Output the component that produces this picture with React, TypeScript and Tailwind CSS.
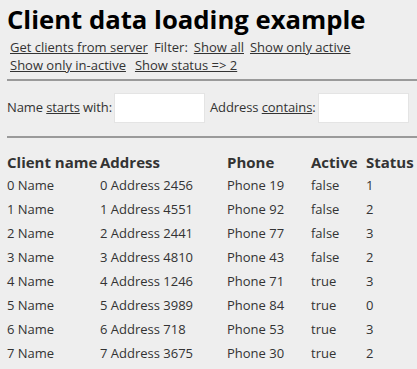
import React from "react";

const clients = [
  { name: "0 Name", address: "0 Address 2456", phone: "Phone 19", active: false, status: 1 },
  { name: "1 Name", address: "1 Address 4551", phone: "Phone 92", active: false, status: 2 },
  { name: "2 Name", address: "2 Address 2441", phone: "Phone 77", active: false, status: 3 },
  { name: "3 Name", address: "3 Address 4810", phone: "Phone 43", active: false, status: 2 },
  { name: "4 Name", address: "4 Address 1246", phone: "Phone 71", active: true, status: 3 },
  { name: "5 Name", address: "5 Address 3989", phone: "Phone 84", active: true, status: 0 },
  { name: "6 Name", address: "6 Address 718", phone: "Phone 53", active: true, status: 3 },
  { name: "7 Name", address: "7 Address 3675", phone: "Phone 30", active: true, status: 2 },
];

const App = () => {
  return (
    <div className="min-h-screen bg-[#eeeeee] pl-[7px] pt-[2px] text-[13px] text-[#333] font-['Open_Sans',sans-serif] overflow-hidden">
      {/* Title */}
      <h1 className="text-[25.7px] font-bold leading-[36px] text-black whitespace-nowrap">
        Client data loading example
      </h1>

      {/* Actions and filters */}
      <div className="pl-[3px] leading-[18px]">
        <div className="flex gap-[6px]">
          <a className="underline cursor-pointer">Get clients from server</a>
          <span>Filter:</span>
          <a className="underline cursor-pointer">Show all</a>
          <a className="underline cursor-pointer">Show only active</a>
        </div>
        <div className="flex gap-[9px]">
          <a className="underline cursor-pointer">Show only in-active</a>
          <a className="underline cursor-pointer">Show status =&gt; 2</a>
        </div>
      </div>

      <hr className="mt-[5px] border-t-2 border-[#9a9a9a]" />

      {/* Search inputs */}
      <div className="flex items-center mt-[12px] whitespace-nowrap tracking-[-0.1px]">
        <label>
          Name <span className="underline">starts</span> with:
        </label>
        <input className="ml-[2px] w-[91px] h-[30px] bg-white border border-[#e4e4e4] outline-none" />
        <label className="ml-[5px]">
          Address <span className="underline">contains</span>:
        </label>
        <input className="ml-[2px] w-[91px] h-[30px] bg-white border border-[#e4e4e4] outline-none" />
      </div>

      <hr className="mt-[13px] border-t-2 border-[#9a9a9a]" />

      {/* Client table */}
      <table className="mt-[12px] border-collapse text-left">
        <thead>
          <tr className="h-[24px]">
            <th className="w-[93px] p-0 font-bold text-[15px] whitespace-nowrap">Client name</th>
            <th className="w-[127px] p-0 font-bold text-[15px]">Address</th>
            <th className="w-[84px] p-0 font-bold text-[15px]">Phone</th>
            <th className="w-[55px] p-0 font-bold text-[15px]">Active</th>
            <th className="p-0 font-bold text-[15px]">Status</th>
          </tr>
        </thead>
        <tbody>
          {clients.map((c) => (
            <tr key={c.name} className="h-[24px]">
              <td className="p-0">{c.name}</td>
              <td className="p-0">{c.address}</td>
              <td className="p-0">{c.phone}</td>
              <td className="p-0">{c.active ? "true" : "false"}</td>
              <td className="p-0">{c.status}</td>
            </tr>
          ))}
        </tbody>
      </table>
    </div>
  );
};

export default App;
